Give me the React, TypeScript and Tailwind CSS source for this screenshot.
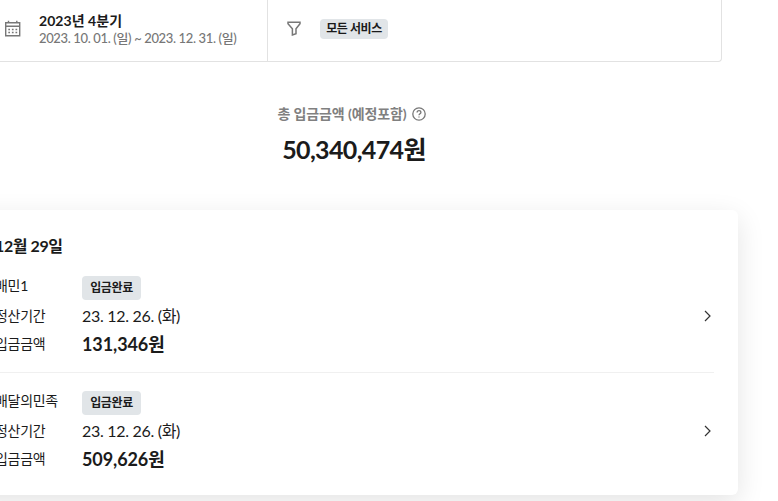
import clsx from 'clsx';

const deposits = [
  { service: '배민1', status: '입금완료', period: '23. 12. 26. (화)', amount: '131,346원' },
  { service: '배달의민족', status: '입금완료', period: '23. 12. 26. (화)', amount: '509,626원' },
];

function CalendarIcon() {
  return (
    <svg width="18" height="18" viewBox="0 0 18 18" fill="none" stroke="#777" className="shrink-0">
      <path d="M1.7 2.8h14v13h-14z M1.7 6.3h14 M4.5 .7v2 M12.8 .7v2" strokeWidth="1.4" />
      <path d="M4.3 9.5h1.7 M7.9 9.5h1.7 M11.5 9.5h1.7 M4.3 12.5h1.7 M7.9 12.5h1.7 M11.5 12.5h1.7" strokeWidth="1.5" />
    </svg>
  );
}

function FilterIcon() {
  return (
    <svg width="14" height="15" viewBox="0 0 14 15" fill="none" stroke="#777" strokeWidth="1.5" className="shrink-0">
      <path d="M1 1.2h12v1.6L9 7.8v5L5.4 14V7.8L1 2.8z" />
    </svg>
  );
}

function HelpIcon() {
  return (
    <svg width="14" height="14" viewBox="0 0 14 14" fill="none" stroke="#777" strokeWidth="1.3">
      <circle cx="7" cy="7" r="6.2" />
      <path d="M5.1 5.5c0-1.1.8-1.9 1.9-1.9s1.9.7 1.9 1.8c0 1.3-1.9 1.4-1.9 2.9 M7 9.4v1.2" />
    </svg>
  );
}

export default function App() {
  return (
    <div className="h-[501px] w-[778px] overflow-hidden bg-white font-['Lato','Noto_Sans_CJK_KR',sans-serif] text-[#1b1b1b]">
      <div className="-ml-[33px] w-[771px]">
        <div className="mx-4 flex h-[62px] rounded-b border border-t-0 border-[#e2e2e2]">
          <div className="flex w-[284px] items-start border-r border-[#e2e2e2] pl-5 pt-5">
            <CalendarIcon />
            <div className="-mt-[9px] ml-[17px] whitespace-nowrap">
              <p className="text-[14px] font-bold leading-[19px] tracking-[0.05px]">2023년 4분기</p>
              <p className="text-[13px] font-medium leading-[17px] tracking-[-0.36px] text-[#777]">
                2023. 10. 01. (일) ~ 2023. 12. 31. (일)
              </p>
            </div>
          </div>
          <div className="flex items-start pl-[19px] pt-[19px]">
            <div className="pt-[2px]"><FilterIcon /></div>
            <span className="ml-[19px] flex h-5 w-[68px] items-center justify-center whitespace-nowrap rounded bg-[#e1e5e8] text-[12px] font-bold tracking-[-0.4px]">
              모든 서비스
            </span>
          </div>
        </div>

        <div className="flex flex-col items-center pt-[42px]">
          <div className="flex items-center gap-[5px] pr-[2px] text-[14px] font-bold leading-5 tracking-[-0.1px] text-[#808080]">
            <span>총 입금금액 (예정포함)</span>
            <HelpIcon />
          </div>
          <p className="mt-[7px] pl-[3px] text-[25px] font-bold leading-9 tracking-[-0.65px]">50,340,474원</p>
        </div>

        <div className="mt-[43px] h-[285px] rounded-md bg-white pl-7 pr-6 pt-[25px] shadow-[0_8px_28px_rgba(0,0,0,0.11)]">
          <h2 className="text-[16px] font-bold leading-[22px] tracking-[-0.4px]">12월 29일</h2>
          {deposits.map((item, i) => (
            <div
              key={item.service}
              className={clsx('flex items-center justify-between', i > 0 ? 'mt-[15px] border-t border-[#f0f0f0] pt-[18px]' : 'mt-[19px]')}
            >
              <dl className="grid grid-cols-[87px_auto] grid-rows-[25px_31px_25px] whitespace-nowrap text-[14px]">
                <dt className="leading-[19px] tracking-[-0.3px]">{item.service}</dt>
                <dd>
                  <span className="flex h-6 w-[59px] items-center justify-center rounded bg-[#e1e5e8] text-[12px] font-bold tracking-[-0.4px]">
                    {item.status}
                  </span>
                </dd>
                <dt className="leading-[29px] tracking-[-0.3px]">정산기간</dt>
                <dd className="text-[16px] leading-[29px] tracking-[-0.3px]">{item.period}</dd>
                <dt className="leading-[23px] tracking-[-0.3px]">입금금액</dt>
                <dd className="text-[18px] font-bold leading-[25px] tracking-[-0.1px]">{item.amount}</dd>
              </dl>
              <svg width="8" height="12" viewBox="0 0 8 12" fill="none" stroke="#333" strokeWidth="1.2" className="mb-[2px] mr-[2px]">
                <path d="M1 1l5 5-5 5" />
              </svg>
            </div>
          ))}
        </div>
      </div>
    </div>
  );
}
